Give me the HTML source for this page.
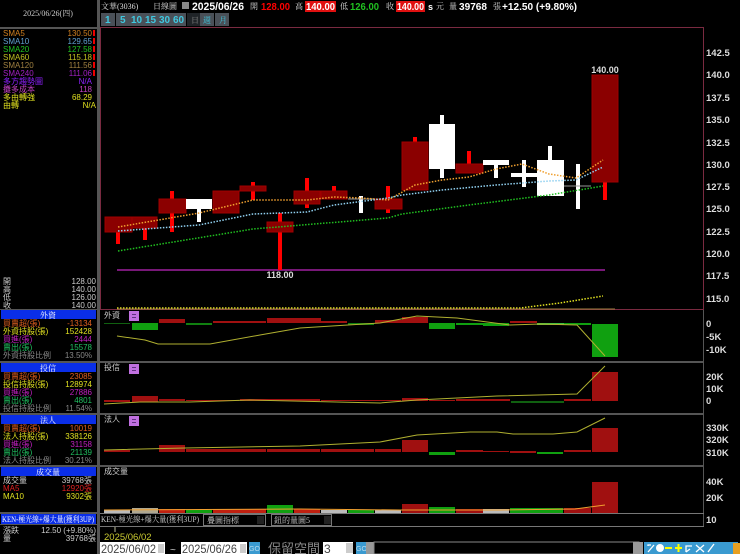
<!DOCTYPE html>
<html><head><meta charset="utf-8"><style>
html,body{margin:0;padding:0;background:#000;width:740px;height:554px;overflow:hidden}
svg{display:block}
text{font-family:"Liberation Sans","Noto Sans CJK TC",sans-serif}
.s{font-family:"Liberation Serif","Noto Serif CJK SC",serif;font-size:8px}
.ax{fill:#ddd;font-size:9.5px;font-weight:bold;font-family:"DejaVu Sans",sans-serif}
</style></head><body>
<svg width="740" height="554" viewBox="0 0 740 554" xmlns="http://www.w3.org/2000/svg">
<rect width="740" height="554" fill="#000"/>
<rect x="97" y="0" width="3" height="554" fill="#555"/>
<rect x="0" y="27" width="97" height="2" fill="#555"/>
<text x="48" y="16" class="s" fill="#ccc" text-anchor="middle">2025/06/26(四)</text>
<g class="s">
<text x="3" y="36" fill="#d08020">SMA5</text><text x="92" y="36" fill="#d08020" text-anchor="end">130.50</text>
<text x="3" y="44" fill="#60a0d0">SMA10</text><text x="92" y="44" fill="#60a0d0" text-anchor="end">129.65</text>
<text x="3" y="52" fill="#20c020">SMA20</text><text x="92" y="52" fill="#20c020" text-anchor="end">127.58</text>
<text x="3" y="60" fill="#c0c020">SMA60</text><text x="92" y="60" fill="#c0c020" text-anchor="end">115.18</text>
<text x="3" y="68" fill="#a08040">SMA120</text><text x="92" y="68" fill="#a08040" text-anchor="end">111.56</text>
<text x="3" y="76" fill="#a020c0">SMA240</text><text x="92" y="76" fill="#a020c0" text-anchor="end">111.06</text>
<text x="3" y="84" fill="#9020ff">多方趨勢圖</text><text x="92" y="84" fill="#9020ff" text-anchor="end">N/A</text>
<text x="3" y="92" fill="#c040c0">攤多成本</text><text x="92" y="92" fill="#c040c0" text-anchor="end">118</text>
<text x="3" y="100" fill="#e0e020">多由轉強</text><text x="92" y="100" fill="#e0e020" text-anchor="end">68.29</text>
<text x="3" y="108" fill="#e0e020">由轉</text><text x="96" y="108" fill="#e0e020" text-anchor="end">N/A</text>
</g>
<g fill="#e00"><rect x="93" y="30" width="2" height="6"/><rect x="93" y="38" width="2" height="6"/><rect x="93" y="46" width="2" height="6"/><rect x="93" y="54" width="2" height="6"/><rect x="93" y="62" width="2" height="6"/><rect x="93" y="70" width="2" height="6"/></g>
<g class="s" fill="#ccc">
<text x="3" y="284">開</text><text x="96" y="284" text-anchor="end">128.00</text>
<text x="3" y="292">高</text><text x="96" y="292" text-anchor="end">140.00</text>
<text x="3" y="300">低</text><text x="96" y="300" text-anchor="end">126.00</text>
<text x="3" y="308">收</text><text x="96" y="308" text-anchor="end">140.00</text>
</g>
<rect x="0" y="309" width="97" height="1" fill="#555"/>
<rect x="1" y="310" width="95" height="9" fill="#0a2ee8"/><text x="48" y="318" class="s" fill="#fff" text-anchor="middle">外資</text>
<g class="s">
<text x="3" y="326" fill="#e06020">買賣超(張)</text><text x="92" y="326" fill="#e06020" text-anchor="end">-13134</text>
<text x="3" y="334" fill="#e0e020">外資持股(張)</text><text x="92" y="334" fill="#e0e020" text-anchor="end">152428</text>
<text x="3" y="342" fill="#c020c0">買進(張)</text><text x="92" y="342" fill="#c020c0" text-anchor="end">2444</text>
<text x="3" y="350" fill="#20c060">賣出(張)</text><text x="92" y="350" fill="#20c060" text-anchor="end">15578</text>
<text x="3" y="358" fill="#888">外資持股比例</text><text x="92" y="358" fill="#888" text-anchor="end">13.50%</text>
</g>
<rect x="0" y="361" width="97" height="2" fill="#555"/>
<rect x="1" y="363" width="95" height="9" fill="#0a2ee8"/><text x="48" y="371" class="s" fill="#fff" text-anchor="middle">投信</text>
<g class="s">
<text x="3" y="379" fill="#e06020">買賣超(張)</text><text x="92" y="379" fill="#e06020" text-anchor="end">23085</text>
<text x="3" y="387" fill="#e0e020">投信持股(張)</text><text x="92" y="387" fill="#e0e020" text-anchor="end">128974</text>
<text x="3" y="395" fill="#c020c0">買進(張)</text><text x="92" y="395" fill="#c020c0" text-anchor="end">27886</text>
<text x="3" y="403" fill="#20c060">賣出(張)</text><text x="92" y="403" fill="#20c060" text-anchor="end">4801</text>
<text x="3" y="411" fill="#888">投信持股比例</text><text x="92" y="411" fill="#888" text-anchor="end">11.54%</text>
</g>
<rect x="0" y="413" width="97" height="2" fill="#555"/>
<rect x="1" y="415" width="95" height="9" fill="#0a2ee8"/><text x="48" y="423" class="s" fill="#fff" text-anchor="middle">法人</text>
<g class="s">
<text x="3" y="431" fill="#e06020">買賣超(張)</text><text x="92" y="431" fill="#e06020" text-anchor="end">10019</text>
<text x="3" y="439" fill="#e0e020">法人持股(張)</text><text x="92" y="439" fill="#e0e020" text-anchor="end">338126</text>
<text x="3" y="447" fill="#c020c0">買進(張)</text><text x="92" y="447" fill="#c020c0" text-anchor="end">31158</text>
<text x="3" y="455" fill="#20c060">賣出(張)</text><text x="92" y="455" fill="#20c060" text-anchor="end">21139</text>
<text x="3" y="463" fill="#888">法人持股比例</text><text x="92" y="463" fill="#888" text-anchor="end">30.21%</text>
</g>
<rect x="0" y="465" width="97" height="2" fill="#555"/>
<rect x="1" y="467" width="95" height="9" fill="#0a2ee8"/><text x="48" y="475" class="s" fill="#fff" text-anchor="middle">成交量</text>
<g class="s">
<text x="3" y="483" fill="#ccc">成交量</text><text x="92" y="483" fill="#ccc" text-anchor="end">39768張</text>
<text x="3" y="491" fill="#e02020">MA5</text><text x="92" y="491" fill="#e02020" text-anchor="end">12920張</text>
<text x="3" y="499" fill="#e0e020">MA10</text><text x="92" y="499" fill="#e0e020" text-anchor="end">9302張</text>
</g>
<rect x="0" y="512" width="97" height="2" fill="#555"/>
<rect x="1" y="514" width="95" height="10" fill="#0a2ee8"/><text x="2" y="522" class="s" fill="#fff" font-size="7.5" textLength="92" lengthAdjust="spacingAndGlyphs">KEN-極光線+爆大量(獲利3UP)</text>
<rect x="0" y="524" width="97" height="1" fill="#555"/>
<g class="s" fill="#ccc"><text x="3" y="533">漲跌</text><text x="96" y="533" text-anchor="end">12.50 (+9.80%)</text>
<text x="3" y="541">量</text><text x="96" y="541" text-anchor="end">39768張</text></g>

<text x="101" y="9" class="s" fill="#ddd">文華(3036)</text>
<text x="153" y="9" class="s" fill="#ddd">日線圖</text>
<rect x="182" y="2" width="7" height="7" fill="#888"/>
<text x="192" y="10" fill="#fff" font-size="11" font-weight="bold" font-family="DejaVu Sans" textLength="52" lengthAdjust="spacingAndGlyphs">2025/06/26</text>
<text x="250" y="9" class="s" fill="#ddd">開</text>
<text x="261" y="10" fill="#f00" font-size="10" font-weight="bold" font-family="DejaVu Sans" textLength="29" lengthAdjust="spacingAndGlyphs">128.00</text>
<text x="295" y="9" class="s" fill="#ddd">高</text>
<rect x="305" y="1" width="31" height="11" fill="#e01010"/>
<text x="306" y="10" fill="#fff" font-size="10" font-weight="bold" font-family="DejaVu Sans" textLength="29" lengthAdjust="spacingAndGlyphs">140.00</text>
<text x="340" y="9" class="s" fill="#ddd">低</text>
<text x="350" y="10" fill="#20c020" font-size="10" font-weight="bold" font-family="DejaVu Sans" textLength="29" lengthAdjust="spacingAndGlyphs">126.00</text>
<text x="386" y="9" class="s" fill="#ddd">收</text>
<rect x="396" y="1" width="29" height="11" fill="#e01010"/>
<text x="397" y="10" fill="#fff" font-size="10" font-weight="bold" font-family="DejaVu Sans" textLength="27" lengthAdjust="spacingAndGlyphs">140.00</text>
<text x="428" y="10" fill="#fff" font-size="9" font-weight="bold">s</text>
<text x="436" y="9" class="s" fill="#ddd">元</text>
<text x="449" y="9" class="s" fill="#ddd">量</text>
<text x="459" y="10" fill="#fff" font-size="10" font-weight="bold" font-family="DejaVu Sans" textLength="28" lengthAdjust="spacingAndGlyphs">39768</text>
<text x="493" y="9" class="s" fill="#ddd">張</text>
<text x="502" y="10" fill="#fff" font-size="10" font-weight="bold" font-family="DejaVu Sans" textLength="75" lengthAdjust="spacingAndGlyphs">+12.50 (+9.80%)</text>
<g font-size="10" font-weight="bold" fill="#40c8e0" font-family="DejaVu Sans">
<rect x="101" y="13" width="14" height="13" fill="#4a5058"/><text x="105" y="23">1</text>
<rect x="116" y="13" width="14" height="13" fill="#4a5058"/><text x="120" y="23">5</text>
<rect x="130" y="13" width="14" height="13" fill="#4a5058"/><text x="131" y="23">10</text>
<rect x="144" y="13" width="14" height="13" fill="#4a5058"/><text x="145" y="23">15</text>
<rect x="158" y="13" width="14" height="13" fill="#4a5058"/><text x="159" y="23">30</text>
<rect x="172" y="13" width="14" height="13" fill="#4a5058"/><text x="173" y="23">60</text>
<rect x="187" y="13" width="13" height="13" fill="#202428"/>
<rect x="200" y="13" width="14" height="13" fill="#4a5058"/>
<rect x="215" y="13" width="14" height="13" fill="#4a5058"/>
</g>
<text x="191" y="23" class="s" fill="#888">日</text><text x="203" y="23" class="s" fill="#40c8e0">週</text><text x="219" y="23" class="s" fill="#40c8e0">月</text>

<rect x="100.5" y="27.5" width="603" height="282" fill="none" stroke="#7a2a40"/>
<g class="ax">
<text x="706" y="56">142.5</text><text x="706" y="78">140.0</text><text x="706" y="101">137.5</text><text x="706" y="123">135.0</text>
<text x="706" y="146">132.5</text><text x="706" y="168">130.0</text><text x="706" y="190">127.5</text><text x="706" y="212">125.0</text>
<text x="706" y="235">122.5</text><text x="706" y="257">120.0</text><text x="706" y="279">117.5</text><text x="706" y="302">115.0</text>
</g>
<line x1="117" y1="270" x2="605" y2="270" stroke="#a020a0" stroke-width="1.5"/>
<text x="280" y="278" fill="#ddd" font-size="9" font-weight="bold" text-anchor="middle" font-family="DejaVu Sans">118.00</text>
<text x="605" y="73" fill="#ddd" font-size="9" font-weight="bold" text-anchor="middle" font-family="DejaVu Sans">140.00</text>
<g fill="#f00">
<rect x="116" y="228" width="4" height="16"/><rect x="143" y="225" width="4" height="15"/>
<rect x="170" y="191" width="4" height="41"/><rect x="251" y="182" width="4" height="18"/>
<rect x="278" y="213" width="4" height="57"/><rect x="305" y="178" width="4" height="30"/>
<rect x="332" y="186" width="4" height="8"/><rect x="386" y="186" width="4" height="27"/>
<rect x="413" y="137" width="4" height="8"/><rect x="467" y="151" width="4" height="16"/>
<rect x="603" y="178" width="4" height="22"/>
</g>
<g fill="#8b0000" stroke="#a00000" stroke-width="1">
<rect x="105" y="217" width="27" height="15"/><rect x="132" y="217" width="25" height="11"/>
<rect x="159" y="199" width="27" height="14"/><rect x="213" y="191" width="26" height="22"/>
<rect x="240" y="186" width="26" height="5"/><rect x="267" y="222" width="26" height="10"/>
<rect x="294" y="191" width="26" height="13"/><rect x="321" y="191" width="26" height="8"/>
<rect x="375" y="199" width="27" height="10"/><rect x="402" y="142" width="26" height="48"/>
<rect x="456" y="164" width="27" height="9"/><rect x="592" y="75" width="26" height="107"/>
</g>
<g fill="#fff">
<rect x="186" y="199" width="26" height="10"/><rect x="197" y="199" width="4" height="23"/>
<rect x="359" y="196" width="4" height="17"/>
<rect x="429" y="124" width="26" height="45"/><rect x="440" y="115" width="4" height="63"/>
<rect x="483" y="160" width="26" height="5"/><rect x="494" y="160" width="4" height="18"/>
<rect x="511" y="173" width="26" height="4"/><rect x="522" y="160" width="4" height="27"/>
<rect x="537" y="160" width="27" height="36"/><rect x="548" y="146" width="4" height="14"/>
<rect x="576" y="164" width="4" height="45"/>
</g>
<line x1="564" y1="186" x2="591" y2="186" stroke="#999"/>
<line x1="348" y1="199" x2="375" y2="199" stroke="#999"/>
<polyline fill="none" stroke="#f0a030" stroke-width="1.5" stroke-dasharray="1.5 1.5" points="118,227 199,213 253,200 307,200 334,197 361,198 388,200 415,185 442,180 469,177 496,169 522,164 549,174 576,178 603,160"/>
<polyline fill="none" stroke="#90d0f0" stroke-width="1.5" stroke-dasharray="1.5 1.5" points="118,231 199,225 253,214 307,212 334,205 388,198 402,195 442,190 496,185 549,181 576,180 603,167"/>
<polyline fill="none" stroke="#20c020" stroke-width="1.5" stroke-dasharray="1.5 1.5" points="118,251 253,229 388,218 402,214 469,205 549,195 603,186"/>
<polyline fill="none" stroke="#e0e020" stroke-width="1.5" stroke-dasharray="1.5 1.5" points="117,308 520,308 560,303 603,296"/>
<line x1="117" y1="309" x2="615" y2="309" stroke="#a08040" stroke-width="1"/>

<rect x="100" y="361" width="604" height="2" fill="#555"/>
<rect x="100" y="413" width="604" height="2" fill="#555"/>
<rect x="100" y="465" width="604" height="2" fill="#555"/>
<rect x="703" y="310" width="1" height="217" fill="#555"/>
<g class="s" fill="#ccc"><text x="104" y="318">外資</text><text x="104" y="370">投信</text><text x="104" y="422">法人</text><text x="104" y="474">成交量</text></g>
<g fill="#c070e0"><rect x="129" y="311" width="10" height="10"/><rect x="129" y="364" width="10" height="10"/><rect x="129" y="416" width="10" height="10"/></g>
<g fill="#603080"><rect x="132" y="314" width="4" height="1"/><rect x="132" y="317" width="4" height="1"/><rect x="132" y="367" width="4" height="1"/><rect x="132" y="370" width="4" height="1"/><rect x="132" y="419" width="4" height="1"/><rect x="132" y="422" width="4" height="1"/></g>
<g class="ax"><text x="706" y="327">0</text><text x="706" y="340">-5K</text><text x="706" y="353">-10K</text>
<text x="706" y="380">20K</text><text x="706" y="392">10K</text><text x="706" y="404">0</text>
<text x="706" y="431">330K</text><text x="706" y="443">320K</text><text x="706" y="456">310K</text>
<text x="706" y="485">40K</text><text x="706" y="501">20K</text><text x="706" y="523">10</text></g>
<g>
<rect x="104" y="323" width="26" height="1" fill="#106010"/>
<rect x="132" y="323" width="26" height="7" fill="#10a010"/>
<rect x="159" y="319" width="26" height="4" fill="#a01010"/>
<rect x="186" y="323" width="26" height="2" fill="#108010"/>
<rect x="213" y="321" width="53" height="2" fill="#a01010"/>
<rect x="267" y="318" width="54" height="5" fill="#a01010"/>
<rect x="321" y="321" width="26" height="2" fill="#a01010"/>
<rect x="348" y="323" width="26" height="2" fill="#108010"/>
<rect x="375" y="320" width="27" height="3" fill="#a01010"/>
<rect x="402" y="317" width="26" height="6" fill="#a01010"/>
<rect x="429" y="323" width="26" height="6" fill="#10a010"/>
<rect x="456" y="323" width="27" height="2" fill="#10a010"/>
<rect x="483" y="323" width="26" height="3" fill="#10a010"/>
<rect x="510" y="321" width="27" height="2" fill="#a01010"/>
<rect x="537" y="323" width="27" height="2" fill="#40c040"/>
<rect x="564" y="323" width="27" height="2" fill="#10a010"/>
<rect x="592" y="324" width="26" height="33" fill="#10a010"/>
</g>
<polyline fill="none" stroke="#b0b030" points="117,336 145,340 158,344 210,344 260,335 300,328 380,323 417,316 457,318 510,325 540,324 577,325 605,356"/>
<g>
<rect x="104" y="400" width="26" height="2" fill="#a01010"/>
<rect x="132" y="396" width="26" height="6" fill="#a01010"/>
<rect x="159" y="399" width="26" height="2" fill="#a01010"/>
<rect x="186" y="400" width="53" height="1" fill="#a01010"/>
<rect x="240" y="399" width="80" height="2" fill="#a01010"/>
<rect x="321" y="400" width="80" height="1" fill="#a01010"/>
<rect x="402" y="398" width="26" height="3" fill="#a01010"/>
<rect x="429" y="400" width="26" height="1" fill="#a01010"/>
<rect x="456" y="399" width="54" height="2" fill="#a01010"/>
<rect x="511" y="401" width="53" height="2" fill="#106010"/>
<rect x="564" y="399" width="27" height="2" fill="#a01010"/>
<rect x="592" y="372" width="26" height="29" fill="#a01010"/>
</g>
<polyline fill="none" stroke="#b0b030" points="104,404 140,402 190,402 250,400 380,403 417,400 497,396 577,394 605,366"/>
<g>
<rect x="104" y="450" width="26" height="2" fill="#a01010"/>
<rect x="159" y="445" width="26" height="7" fill="#a01010"/>
<rect x="186" y="449" width="80" height="3" fill="#a01010"/>
<rect x="267" y="449" width="53" height="3" fill="#a01010"/>
<rect x="321" y="449" width="53" height="3" fill="#a01010"/>
<rect x="375" y="449" width="26" height="3" fill="#a01010"/>
<rect x="402" y="440" width="26" height="12" fill="#a01010"/>
<rect x="429" y="452" width="26" height="3" fill="#10a010"/>
<rect x="456" y="450" width="27" height="2" fill="#a01010"/>
<rect x="483" y="451" width="26" height="1" fill="#a01010"/>
<rect x="510" y="451" width="26" height="2" fill="#a01010"/>
<rect x="537" y="452" width="26" height="2" fill="#10a010"/>
<rect x="564" y="450" width="27" height="2" fill="#a01010"/>
<rect x="592" y="428" width="26" height="24" fill="#a01010"/>
</g>
<polyline fill="none" stroke="#b0b030" points="104,450 185,448 300,446 380,442 417,435 470,432 497,432 513,434 553,434 577,432 605,418"/>
<g>
<rect x="104" y="510" width="26" height="3" fill="#bbb"/>
<rect x="132" y="508" width="26" height="5" fill="#b0a890"/>
<rect x="159" y="509" width="26" height="4" fill="#c02010"/>
<rect x="186" y="510" width="26" height="3" fill="#10a010"/>
<rect x="213" y="509" width="53" height="4" fill="#c02010"/>
<rect x="267" y="505" width="26" height="8" fill="#10a010"/>
<rect x="294" y="509" width="26" height="4" fill="#c02010"/>
<rect x="321" y="510" width="26" height="3" fill="#bbb"/>
<rect x="348" y="510" width="26" height="3" fill="#10a010"/>
<rect x="375" y="510" width="26" height="3" fill="#bbb"/>
<rect x="402" y="504" width="26" height="9" fill="#a01010"/>
<rect x="429" y="507" width="26" height="6" fill="#10a010"/>
<rect x="456" y="509" width="27" height="4" fill="#a01010"/>
<rect x="483" y="509" width="26" height="4" fill="#bbb"/>
<rect x="510" y="508" width="53" height="5" fill="#10a010"/>
<rect x="564" y="508" width="27" height="5" fill="#a01010"/>
<rect x="592" y="482" width="26" height="31" fill="#a01010"/>
</g>
<polyline fill="none" stroke="#f0a030" points="104,510 300,509 400,510 500,510 575,509 590,507 605,505"/>
<line x1="100" y1="513.5" x2="704" y2="513.5" stroke="#777"/>
<line x1="100" y1="526.5" x2="704" y2="526.5" stroke="#777"/>
<text x="101" y="522" class="s" fill="#ccc" font-size="7.5" textLength="98" lengthAdjust="spacingAndGlyphs">KEN-極光線+爆大量(獲利3UP)</text>
<rect x="203.5" y="514.5" width="62" height="11" fill="#000" stroke="#777"/><text x="207" y="523" class="s" fill="#ccc">疊圖指標</text>
<rect x="257" y="516" width="7" height="8" fill="#222"/>
<rect x="271.5" y="514.5" width="60" height="11" fill="#000" stroke="#777"/><text x="274" y="523" class="s" fill="#ccc">鈕的量圖5</text>
<rect x="324" y="516" width="7" height="8" fill="#222"/>
<line x1="115" y1="527" x2="115" y2="532" stroke="#bb9"/>
<text x="104" y="540" fill="#c8c830" font-size="9.5" font-family="DejaVu Sans">2025/06/02</text>
<rect x="100" y="542" width="65" height="12" fill="#fff"/><text x="101" y="553" fill="#444" font-size="12" font-family="Liberation Serif" textLength="55" lengthAdjust="spacingAndGlyphs">2025/06/02</text>
<rect x="158" y="544" width="6" height="9" fill="#ccc"/>
<text x="170" y="553" fill="#ccc" font-size="10">~</text>
<rect x="181" y="542" width="66" height="12" fill="#fff"/><text x="182" y="553" fill="#444" font-size="12" font-family="Liberation Serif" textLength="55" lengthAdjust="spacingAndGlyphs">2025/06/26</text>
<rect x="240" y="544" width="6" height="9" fill="#ccc"/>
<rect x="249" y="542" width="11" height="12" fill="#3a9ad0"/><text x="249" y="551" fill="#bde" font-size="7">GO</text>
<text x="268" y="553" fill="#888" font-size="13" font-family="Noto Sans CJK TC,sans-serif">保留空間</text>
<rect x="323" y="542" width="30" height="12" fill="#fff"/><text x="324" y="553" fill="#444" font-size="12" font-family="Liberation Serif">3</text>
<rect x="346" y="543" width="7" height="10" fill="#ccc"/>
<rect x="356" y="542" width="10" height="12" fill="#3a9ad0"/><text x="356" y="551" fill="#bde" font-size="7">GO</text>
<rect x="366" y="542" width="8" height="12" fill="#999"/>
<rect x="374" y="542" width="265" height="12" fill="#000" stroke="#888"/>
<rect x="633" y="542" width="10" height="12" fill="#999"/>
<rect x="644" y="542" width="94" height="12" fill="#3a9ad0"/>
<g stroke="#fff" stroke-width="1.3" fill="none">
<path d="M648 552 L654 545 M648 546 L648 545 L651 545"/>
<circle cx="660" cy="548" r="4" fill="#fff" stroke="none"/>
<path d="M665 548 H672" stroke="#ff0" stroke-width="2"/>
<path d="M675 548 H682 M678.5 544 V552" stroke="#ff0" stroke-width="2"/>
<path d="M686 552 L686 546 L692 546 M686 552 L690 549"/>
<path d="M696 545 L704 552 M704 545 L696 552"/>
<path d="M708 552 L714 544"/>
</g>
<rect x="733" y="543" width="7" height="11" fill="#e8a020"/>
</svg>
</body></html>
